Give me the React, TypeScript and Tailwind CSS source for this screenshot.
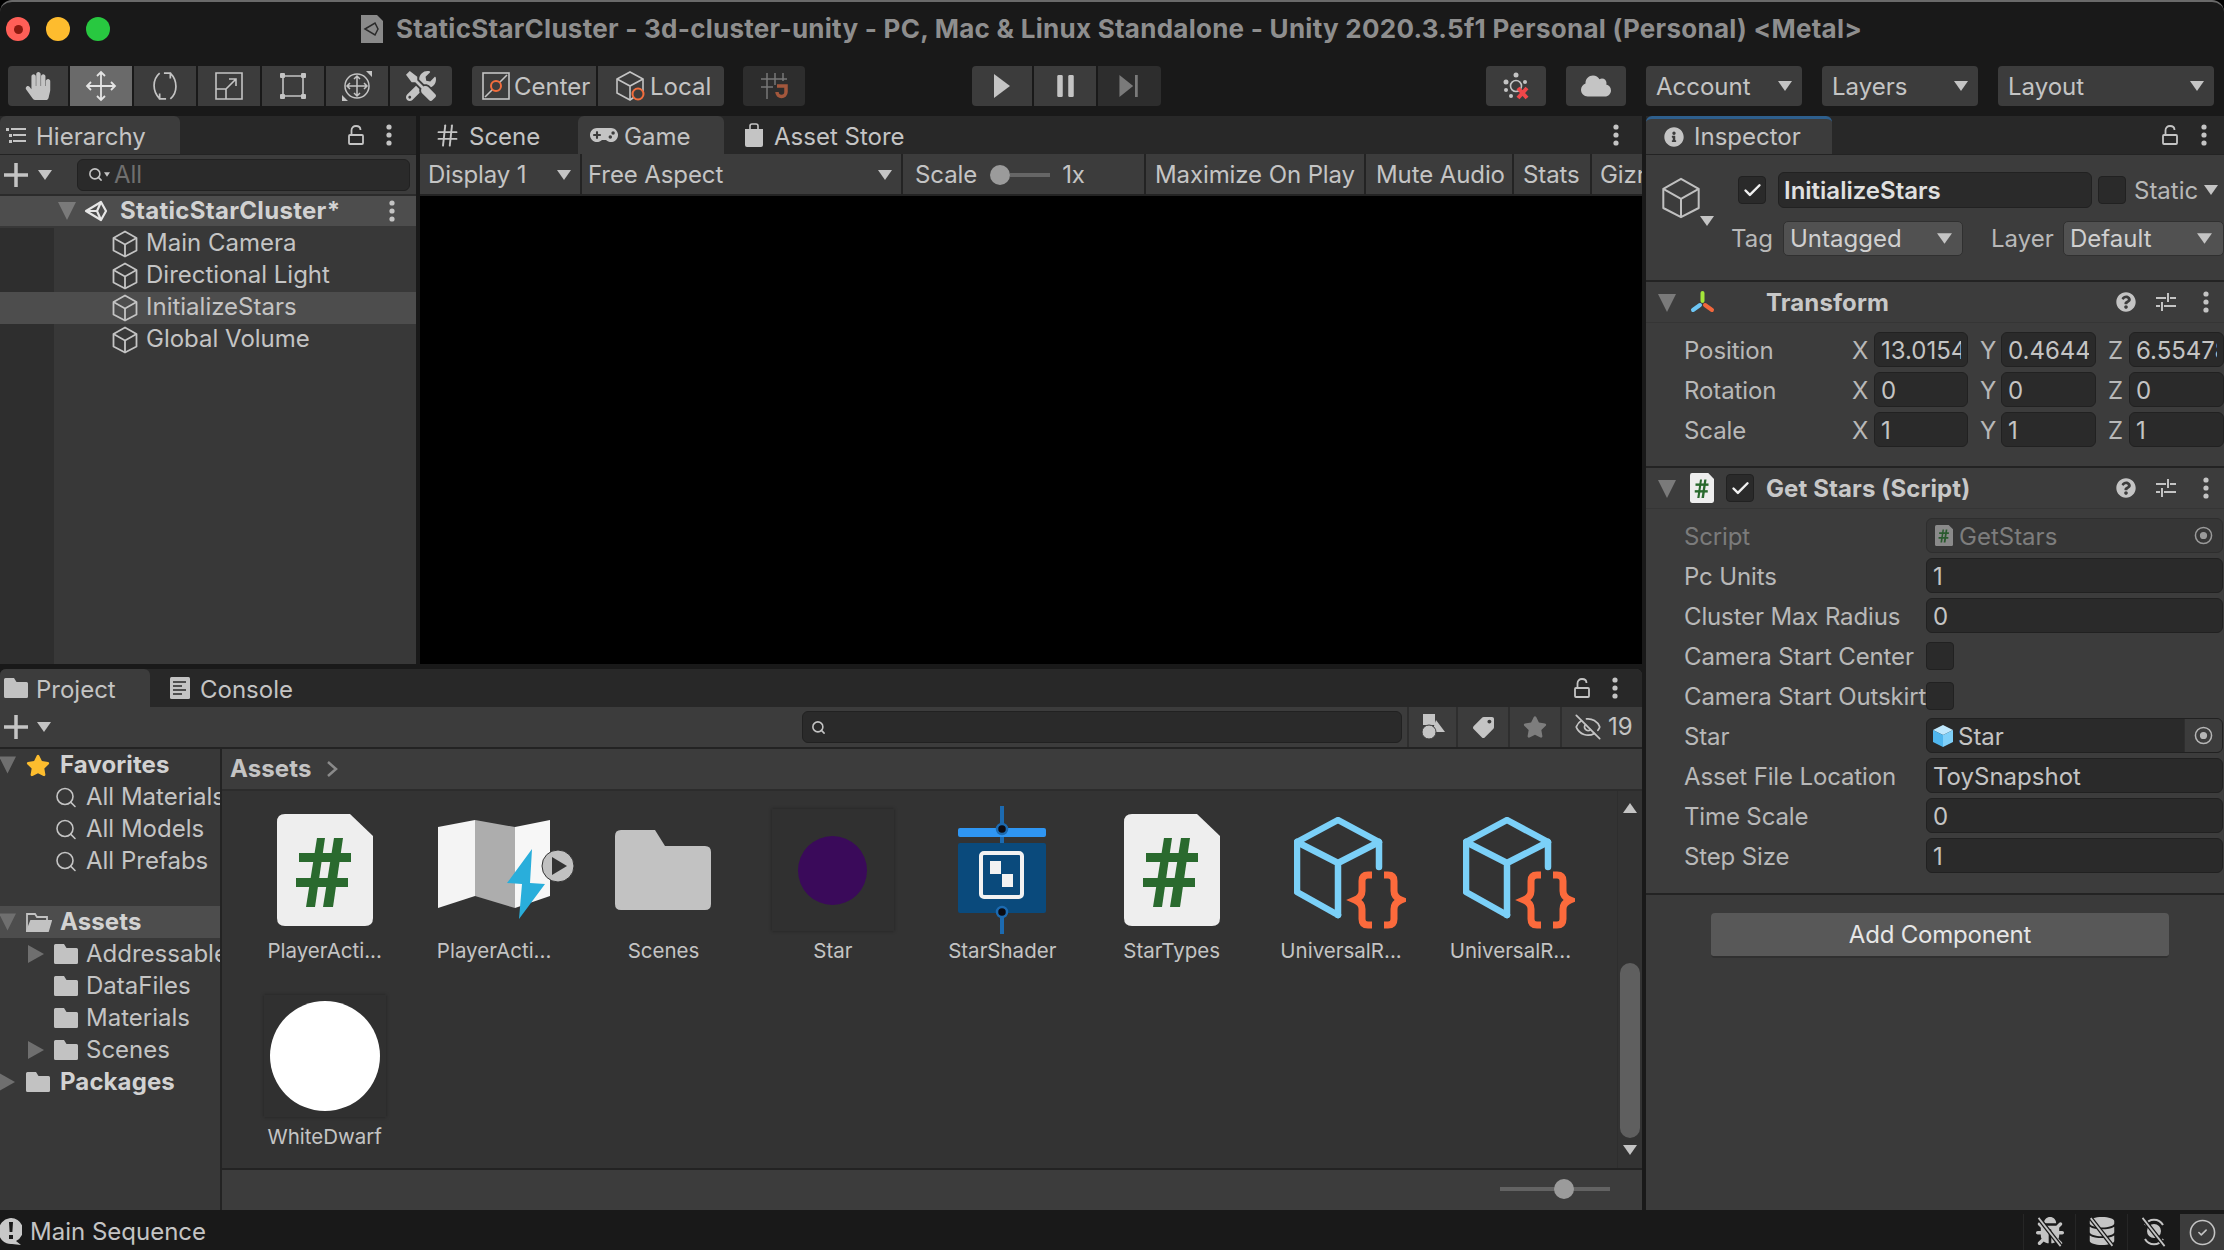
import React from "react";
import { FaHandPaper, FaTools, FaCloud, FaGamepad, FaInfoCircle, FaQuestionCircle, FaStar, FaTag, FaBug, FaDatabase } from "react-icons/fa";
import { Hash, Search, EyeOff, CircleCheck, Check } from "lucide-react";

const Tri = ({ dir = "down", className = "" }: { dir?: string; className?: string }) => {
  const p = dir === "down" ? "0,0 14,0 7,10" : dir === "right" ? "0,0 16,9 0,18" : dir === "up" ? "7,0 14,10 0,10" : "0,0 18,0 9,18";
  const vb = dir === "right" ? "0 0 16 18" : dir === "big" ? "0 0 18 18" : "0 0 14 10";
  return (
    <svg viewBox={vb} className={className}>
      <polygon points={p} fill="currentColor" />
    </svg>
  );
};

const Dots = ({ className = "" }: { className?: string }) => (
  <svg viewBox="0 0 6 22" className={"w-[6px] h-[22px] text-[#c4c4c4] " + className}>
    <circle cx="3" cy="3" r="2.6" fill="currentColor" />
    <circle cx="3" cy="11" r="2.6" fill="currentColor" />
    <circle cx="3" cy="19" r="2.6" fill="currentColor" />
  </svg>
);

const Lock = ({ className = "" }: { className?: string }) => (
  <svg viewBox="0 0 16 20" className={"w-[16px] h-[20px] " + className} fill="none" stroke="#c4c4c4" strokeWidth="1.8">
    <rect x="1" y="10" width="14" height="9" rx="1" />
    <path d="M3.5 10V5.5C3.5 2.5 5.5 1 8 1s4.5 1.5 4.5 4" />
  </svg>
);

const Cube = ({ className = "", color = "#c4c4c4", sw = 1.8 }: { className?: string; color?: string; sw?: number }) => (
  <svg viewBox="0 0 26 28" className={className} fill="none" stroke={color} strokeWidth={sw} strokeLinejoin="round">
    <path d="M13 1.5 24.5 8v12.5L13 26.5 1.5 20.5V8Z" />
    <path d="M1.5 8 13 14.5 24.5 8M13 14.5v12" />
  </svg>
);

const UnityLogo = ({ className = "", color = "#e6e6e6" }: { className?: string; color?: string }) => (
  <svg viewBox="0 0 24 22" className={className} fill="none" stroke={color} strokeWidth="2.2" strokeLinejoin="round">
    <path d="M2 11 17 2l5 9-5 9Z" />
    <path d="M2 11h11l4-9M13 11l4 9" />
  </svg>
);

const Page = ({ className = "", color = "#2a6a2e", bg = "#eeeeee" }: { className?: string; color?: string; bg?: string }) => (
  <svg viewBox="0 0 96 112" className={className} preserveAspectRatio="none">
    <path d="M8 0H73L96 22V104Q96 112 88 112H8Q0 112 0 104V8Q0 0 8 0Z" fill={bg} />
    <polygon points="40,24 48,24 38,93 29,93" fill={color} />
    <polygon points="57,24 66,24 56,93 46,93" fill={color} />
    <polygon points="22,39 74,39 74,48 22,48" fill={color} />
    <polygon points="19,64 71,64 71,73 19,73" fill={color} />
  </svg>
);

const FolderI = ({ className = "" }: { className?: string }) => (
  <svg viewBox="0 0 96 80" className={className}>
    <path d="M6 0H40L50 16H90Q96 16 96 22V74Q96 80 90 80H6Q0 80 0 74V6Q0 0 6 0Z" fill="#c2c2c2" />
  </svg>
);

const FolderOpen = ({ className = "" }: { className?: string }) => (
  <svg viewBox="0 0 26 20" className={className} fill="none" stroke="#c2c2c2" strokeWidth="1.8">
    <path d="M1 19V2h8l2 3h10v4" />
    <path d="M1 19 5 9h20l-3 10Z" fill="#c2c2c2" />
  </svg>
);

const Target = () => (
  <div className="w-[38px] h-[33px] flex items-center justify-center bg-[#3c3c3c] border-l border-[#2f2f2f] ml-auto">
    <svg viewBox="0 0 20 20" className="w-[19px] h-[19px]" fill="none" stroke="#b5b5b5" strokeWidth="1.6">
      <circle cx="10" cy="10" r="8.5" />
      <circle cx="10" cy="10" r="3" fill="#b5b5b5" />
    </svg>
  </div>
);

const Sliders = () => (
  <svg viewBox="0 0 20 20" className="w-[20px] h-[20px]" fill="none" stroke="#c4c4c4" strokeWidth="2">
    <path d="M0 6h10M14 6h6M12 1v9M0 14h4M8 14h12M6 10v9" />
  </svg>
);

const TBtn = ({ className = "", children }: { className?: string; children?: React.ReactNode }) => (
  <div className={"h-[40px] flex items-center justify-center bg-[#3c3c3c] " + className}>{children}</div>
);

const Drop = ({ label, className = "" }: { label: string; className?: string }) => (
  <div className={"h-[40px] rounded-[4px] bg-[#3c3c3c] flex items-center justify-between pl-[10px] pr-[10px] text-[#c4c4c4] " + className}>
    <span className="translate-y-[1px]">{label}</span>
    <Tri className="w-[14px] h-[10px] text-[#c4c4c4]" />
  </div>
);

const Toolbar = () => (
  <div className="h-[40px] flex pl-[8px] shrink-0">
    <div className="flex gap-[2px]">
      <TBtn className="w-[60px] rounded-l-[4px]"><FaHandPaper className="w-[28px] h-[28px] text-[#c4c4c4]" /></TBtn>
      <TBtn className="w-[62px] !bg-[#6a6a6a]">
        <svg viewBox="0 0 32 32" className="w-[32px] h-[32px]" fill="none" stroke="#e4e4e4" strokeWidth="1.8">
          <path d="M16 2v28M2 16h28M12 6l4-4 4 4M12 26l4 4 4-4M6 12l-4 4 4 4M26 12l4 4-4 4" />
        </svg>
      </TBtn>
      <TBtn className="w-[62px]">
        <svg viewBox="0 0 30 30" className="w-[32px] h-[32px]" fill="none" stroke="#c4c4c4" strokeWidth="1.6">
          <path d="M10 3C3 9 3 20 10 27M20 27c7-6 7-17 0-24M14 3H20v5M16 27h-6v-5" />
        </svg>
      </TBtn>
      <TBtn className="w-[62px]">
        <svg viewBox="0 0 28 28" className="w-[28px] h-[28px]" fill="none" stroke="#c4c4c4" strokeWidth="1.6">
          <path d="M1 1h26v26H1zM1 17h10v10M11 17l10-10M14 7h7v7" />
        </svg>
      </TBtn>
      <TBtn className="w-[62px]">
        <svg viewBox="0 0 28 28" className="w-[28px] h-[28px]" stroke="#c4c4c4" strokeWidth="1.6" fill="#c4c4c4">
          <path d="M4 4h20M4 24h20M4 4v20M24 4v20" fill="none" />
          <rect x="1" y="1" width="5" height="5" rx="1" strokeWidth="0" />
          <rect x="22" y="1" width="5" height="5" rx="1" strokeWidth="0" />
          <rect x="1" y="22" width="5" height="5" rx="1" strokeWidth="0" />
          <rect x="22" y="22" width="5" height="5" rx="1" strokeWidth="0" />
        </svg>
      </TBtn>
      <TBtn className="w-[62px]">
        <svg viewBox="0 0 32 32" className="w-[32px] h-[32px]" fill="none" stroke="#c4c4c4" strokeWidth="1.5">
          <circle cx="16" cy="16" r="12" />
          <path d="M16 6v20M6 16h20M13 9l3-3 3 3M13 23l3 3 3-3M9 13l-3 3 3 3M23 13l3 3-3 3" />
          <path d="M25 1h6v6zM1 25v6h6z" fill="#c4c4c4" strokeWidth="0" />
        </svg>
      </TBtn>
      <TBtn className="w-[62px] rounded-r-[4px]"><FaTools className="w-[30px] h-[30px] text-[#c4c4c4]" /></TBtn>
    </div>
    <div className="flex gap-[2px] ml-[20px]">
      <TBtn className="w-[124px] rounded-l-[4px] text-[#c4c4c4] gap-[4px] justify-start pl-[10px]">
        <svg viewBox="0 0 28 28" className="w-[28px] h-[28px] shrink-0" fill="none" stroke="#c4c4c4" strokeWidth="1.6">
          <rect x="1" y="1" width="26" height="26" />
          <path d="M3 25 25 3" />
          <circle cx="14" cy="14" r="5" stroke="#f26d3d" strokeWidth="2" fill="#3c3c3c" />
        </svg>
        <span className="translate-y-[1px]">Center</span>
      </TBtn>
      <TBtn className="w-[126px] rounded-r-[4px] text-[#c4c4c4] gap-[4px] justify-start pl-[18px]">
        <svg viewBox="0 0 30 30" className="w-[30px] h-[30px] shrink-0" fill="none" stroke="#c4c4c4" strokeWidth="1.6">
          <path d="M14 1 27 8v12l-13 9L1 22V8Z" />
          <path d="M1 8l13 7 13-7M14 15v14" />
          <circle cx="22" cy="23" r="5.5" stroke="#f26d3d" strokeWidth="2" fill="#3c3c3c" />
        </svg>
        <span className="translate-y-[1px]">Local</span>
      </TBtn>
    </div>
    <TBtn className="w-[62px] ml-[19px] rounded-[4px] !bg-[#2d2d2d]">
      <svg viewBox="0 0 28 28" className="w-[28px] h-[28px]" fill="none" strokeWidth="1.5">
        <path d="M7 1v26M15 1v12M23 1v8M1 7h26M1 15h12" stroke="#777" />
        <path d="M17 14h9v6a4.500 4.500 0 0 1-9 0" stroke="#a3573c" strokeWidth="3.500" />
      </svg>
    </TBtn>
    <div className="flex gap-[2px] ml-[167px]">
      <TBtn className="w-[60px] rounded-l-[4px]">
        <svg viewBox="0 0 18 26" className="w-[18px] h-[26px]"><polygon points="1,1 17,13 1,25" fill="#c4c4c4" /></svg>
      </TBtn>
      <TBtn className="w-[62px]">
        <svg viewBox="0 0 18 24" className="w-[17px] h-[22px]"><rect width="6" height="24" rx="1.500" fill="#c4c4c4" /><rect x="12" width="6" height="24" rx="1.500" fill="#c4c4c4" /></svg>
      </TBtn>
      <TBtn className="w-[63px] rounded-r-[4px] !bg-[#2d2d2d]">
        <svg viewBox="0 0 22 24" className="w-[21px] h-[22px]"><polygon points="0,0 15,12 0,24" fill="#7a7a7a" /><rect x="17" width="3" height="24" fill="#7a7a7a" /></svg>
      </TBtn>
    </div>
    <TBtn className="w-[60px] ml-[325px] rounded-[4px]">
      <svg viewBox="0 0 30 30" className="w-[30px] h-[30px] translate-x-[2px]">
        <g fill="#c4c4c4">
          <circle cx="13" cy="4" r="2.500" /><circle cx="3" cy="11" r="2.500" /><circle cx="3" cy="19" r="2" /><circle cx="22" cy="11" r="2" /><circle cx="8" cy="25" r="2" />
        </g>
        <circle cx="13" cy="15" r="5.500" fill="none" stroke="#c4c4c4" strokeWidth="1.600" />
        <path d="M15 17l9 10M24 17l-9 10" stroke="#f0474a" strokeWidth="4" />
      </svg>
    </TBtn>
    <TBtn className="w-[60px] ml-[20px] rounded-[4px]"><FaCloud className="w-[30px] h-[30px] text-[#c4c4c4]" /></TBtn>
    <Drop label="Account" className="w-[156px] ml-[20px]" />
    <Drop label="Layers" className="w-[156px] ml-[20px]" />
    <Drop label="Layout" className="w-[216px] ml-[20px]" />
  </div>
);

const Tab = ({ active = false, className = "", children }: { active?: boolean; className?: string; children?: React.ReactNode }) => (
  <div className={"h-[38px] flex items-center rounded-t-[6px] text-[#c4c4c4] shrink-0 " + (active ? "bg-[#3c3c3c] " : "") + className}>{children}</div>
);

const HierRow = ({ label, selected = false }: { label: string; selected?: boolean }) => (
  <div className={"h-[32px] flex items-center pl-[112px] " + (selected ? "bg-[#4d4d4d]" : "")}>
    <Cube className="w-[26px] h-[28px] shrink-0" />
    <span className="ml-[8px] text-[#c4c4c4] -translate-y-[1px]">{label}</span>
  </div>
);

const Hierarchy = () => (
  <div className="w-[416px] flex flex-col bg-[#383838] shrink-0">
    <div className="h-[38px] bg-[#282828] flex items-center shrink-0">
      <Tab active className="w-[180px] pl-[6px]">
        <svg viewBox="0 0 20 20" className="w-[20px] h-[20px]" fill="#c4c4c4">
          <rect x="0" y="3" width="3" height="3" /><rect x="5" y="3" width="15" height="2" /><rect x="3" y="9" width="3" height="3" /><rect x="7" y="9" width="13" height="2" /><rect x="3" y="15" width="3" height="3" /><rect x="7" y="15" width="13" height="2" />
        </svg>
        <span className="ml-[10px] translate-y-[2px]">Hierarchy</span>
      </Tab>
      <Lock className="ml-[168px]" />
      <Dots className="ml-[22px]" />
    </div>
    <div className="h-[42px] bg-[#3c3c3c] flex items-center border-t border-[#232323] border-b-2 border-b-[#2b2b2b] shrink-0">
      <svg viewBox="0 0 24 24" className="w-[24px] h-[24px] ml-[4px]" stroke="#c4c4c4" strokeWidth="3.500"><path d="M12 0v24M0 12h24" /></svg>
      <Tri className="w-[14px] h-[10px] text-[#c4c4c4] ml-[10px]" />
      <div className="w-[333px] h-[32px] ml-[25px] rounded-[6px] bg-[#2a2a2a] border border-[#212121] flex items-center pl-[10px] text-[#6f6f6f]">
        <Search className="w-[15px] h-[15px] text-[#c4c4c4]" strokeWidth={2.500} />
        <Tri className="w-[6px] h-[5px] text-[#c4c4c4] ml-[1px]" />
        <span className="ml-[4px]">All</span>
      </div>
    </div>
    <div className="h-[30px] bg-[#4d4d4d] flex items-center shrink-0 mt-0">
      <Tri dir="big" className="w-[18px] h-[18px] text-[#7a7a7a] ml-[58px]" />
      <UnityLogo className="w-[24px] h-[22px] ml-[8px]" />
      <span className="ml-[12px] font-bold tracking-[0.3px] text-[#d2d2d2]">StaticStarCluster*</span>
      <Dots className="ml-auto mr-[21px]" />
    </div>
    <div className="flex-1 flex pt-[2px] bg-[#383838]">
      <div className="w-full bg-[linear-gradient(to_right,#2e2e2e_54px,transparent_54px)]">
        <HierRow label="Main Camera" />
        <HierRow label="Directional Light" />
        <HierRow label="InitializeStars" selected />
        <HierRow label="Global Volume" />
      </div>
    </div>
  </div>
);

const GSeg = ({ className = "", children }: { className?: string; children?: React.ReactNode }) => (
  <div className={"h-[40px] pt-[1px] bg-[#3c3c3c] flex items-center text-[#c4c4c4] whitespace-nowrap overflow-hidden shrink-0 tracking-[-0.1px] " + className}>{children}</div>
);

const Game = () => (
  <div className="w-[1222px] flex flex-col shrink-0 bg-black">
    <div className="h-[38px] bg-[#282828] flex items-center shrink-0 text-[#c4c4c4]">
      <Tab className="w-[158px] pl-[14px]">
        <Hash className="w-[27px] h-[27px]" strokeWidth={1.700} />
        <span className="ml-[8px] translate-y-[2px]">Scene</span>
      </Tab>
      <Tab active className="w-[146px] pl-[12px]">
        <FaGamepad className="w-[28px] h-[24px]" />
        <span className="ml-[6px] translate-y-[2px]">Game</span>
      </Tab>
      <Tab className="w-[240px] pl-[20px]">
        <svg viewBox="0 0 20 24" className="w-[20px] h-[24px]">
          <path d="M1 6h18v16a2 2 0 0 1-2 2H3a2 2 0 0 1-2-2Z" fill="#c4c4c4" />
          <path d="M6 9V3a2 2 0 0 1 2-2h4a2 2 0 0 1 2 2v6" fill="none" stroke="#c4c4c4" strokeWidth="1.600" />
        </svg>
        <span className="ml-[10px] translate-y-[2px]">Asset Store</span>
      </Tab>
      <Dots className="ml-[649px]" />
    </div>
    <div className="h-[42px] flex gap-[2px] border-b-2 border-[#232323] bg-[#232323] shrink-0 overflow-hidden">
      <GSeg className="w-[160px] pl-[8px] justify-between pr-[9px]"><span>Display 1</span><Tri className="w-[14px] h-[10px]" /></GSeg>
      <GSeg className="w-[319px] pl-[6px] justify-between pr-[9px]"><span>Free Aspect</span><Tri className="w-[14px] h-[10px]" /></GSeg>
      <GSeg className="w-[241px] pl-[12px]">
        <span>Scale</span>
        <div className="ml-[13px] w-[20px] h-[20px] rounded-full bg-[#9b9b9b] shrink-0" />
        <div className="w-[40px] h-[4px] bg-[#666666] shrink-0" />
        <span className="ml-[12px]">1x</span>
      </GSeg>
      <GSeg className="w-[218px] pl-[9px]">Maximize On Play</GSeg>
      <GSeg className="w-[146px] pl-[10px]">Mute Audio</GSeg>
      <GSeg className="w-[76px] pl-[9px]">Stats</GSeg>
      <GSeg className="w-[50px] pl-[8px]">Gizmos</GSeg>
    </div>
    <div className="flex-1 bg-black" />
  </div>
);

const SideRow = ({ icon, label, arrow = 0, bold = false, sel = false, level = 1 }: { icon: React.ReactNode; label: string; arrow?: number; bold?: boolean; sel?: boolean; level?: number }) => (
  <div className={"h-[32px] w-[220px] flex items-center relative overflow-hidden whitespace-nowrap " + (sel ? "bg-[#4d4d4d]" : "")}>
    {arrow === 1 && <Tri dir="big" className="absolute left-[-1px] top-[7px] w-[17px] h-[18px] text-[#6f6f6f]" />}
    {arrow === 2 && <Tri dir="right" className="absolute left-[-1px] top-[7px] w-[16px] h-[18px] text-[#6f6f6f]" />}
    {arrow === 3 && <Tri dir="right" className="absolute left-[28px] top-[7px] w-[16px] h-[18px] text-[#6f6f6f]" />}
    <div className={level === 1 ? "w-[54px] ml-[26px] shrink-0 flex items-center h-[26px] overflow-hidden" : "ml-[54px] w-[24px] shrink-0 flex items-center h-[26px]"}>{icon}</div>
    <span className={(level === 1 ? "-ml-[20px] " : "ml-[8px] ") + (bold ? "font-bold tracking-[0.1px] text-[#d2d2d2]" : "text-[#c4c4c4]")}>{label}</span>
  </div>
);

const SearchI = () => <Search className="w-[25px] h-[25px] text-[#c4c4c4]" strokeWidth={1.600} />;

const Item = ({ label, children }: { label: string; children: React.ReactNode }) => (
  <div className="flex flex-col items-center w-[169.4px] h-[186px]">
    <div className="h-[122px] w-full flex items-center justify-center">{children}</div>
    <div className="h-[40px] flex items-center text-[20.5px] text-[#c4c4c4] whitespace-nowrap">{label}</div>
  </div>
);

const Thumb = ({ color, d }: { color: string; d: string }) => (
  <div className="w-[122px] h-[122px] bg-[#303030] shadow-[0_0_3px_#222222] flex items-center justify-center">
    <div className={"rounded-full " + d} style={{ backgroundColor: color }} />
  </div>
);

const URP = () => (
  <svg viewBox="0 0 112 112" className="w-[112px] h-[112px] translate-x-[9px] translate-y-[3px]" fill="none">
    <g stroke="#7bd0f8" strokeWidth="6.500" strokeLinejoin="round" strokeLinecap="round">
      <path d="M85 50V25L44 3 3 25V75L44 98" />
      <path d="M3 25 44 46 85 25M44 46V98" />
    </g>
    <g stroke="#fb6a3c" strokeWidth="7">
      <path d="M78 58H74Q68 58 68 64V74Q68 80 61 83 68 86 68 92V102Q68 108 74 108H78" />
      <path d="M90 58H94Q100 58 100 64V74Q100 80 107 83 100 86 100 92V102Q100 108 94 108H90" />
    </g>
  </svg>
);

const MapI = () => (
  <svg viewBox="0 0 136 100" className="w-[136px] h-[100px] translate-x-[12px] shrink-0">
    <polygon points="0,7 37,0 37,76 0,88" fill="#f4f4f4" />
    <polygon points="37,0 77,7 77,88 37,76" fill="#adadad" />
    <polygon points="77,7 112,0 112,76 77,88" fill="#f7f7f7" />
    <polygon points="94,29 69,63 84,64 81,99 107,64 92,63" fill="#29aedb" />
    <circle cx="120" cy="46" r="16" fill="#c1c1c1" stroke="#333" strokeWidth="1" />
    <polygon points="114,37 114,55 129,46" fill="#333333" />
  </svg>
);

const ShaderI = () => (
  <svg viewBox="0 0 88 128" className="w-[88px] h-[128px]">
    <path d="M44 0V128" stroke="#1c6ab0" strokeWidth="4" />
    <rect x="0" y="22" width="88" height="9" rx="2" fill="#2f96f3" />
    <rect x="0" y="37" width="88" height="70" rx="2" fill="#0a4a7c" />
    <rect x="23" y="47" width="41" height="44" rx="3" fill="none" stroke="#f2f2f2" strokeWidth="4" />
    <rect x="32" y="55" width="11" height="13" fill="#f2f2f2" />
    <rect x="44" y="68" width="11" height="13" fill="#f2f2f2" />
    <circle cx="44" cy="23" r="5" fill="#0b0b12" stroke="#1c6ab0" strokeWidth="2.500" />
    <circle cx="44" cy="106" r="5" fill="#0b0b12" stroke="#1c6ab0" strokeWidth="2.500" />
  </svg>
);

const Project = () => (
  <div className="flex-1 flex flex-col bg-[#383838] min-h-0 rounded-t-[6px]">
    <div className="h-[38px] bg-[#282828] flex items-center shrink-0 rounded-t-[6px]">
      <Tab active className="w-[150px] pl-[4px]">
        <FolderI className="w-[24px] h-[20px]" />
        <span className="ml-[8px] translate-y-[2px]">Project</span>
      </Tab>
      <div className="flex items-center pl-[20px] text-[#c4c4c4]">
        <svg viewBox="0 0 20 22" className="w-[20px] h-[22px]">
          <rect width="20" height="22" rx="1.500" fill="#c4c4c4" />
          <path d="M3 5h13M3 9h9M3 13h13M3 17h9" stroke="#282828" strokeWidth="1.600" />
        </svg>
        <span className="ml-[10px] translate-y-[2px]">Console</span>
      </div>
      <Lock className="ml-[1281px]" />
      <Dots className="ml-[22px]" />
    </div>
    <div className="h-[40px] bg-[#3c3c3c] flex items-center shrink-0">
      <svg viewBox="0 0 24 24" className="w-[24px] h-[24px] ml-[4px]" stroke="#c4c4c4" strokeWidth="3.500"><path d="M12 0v24M0 12h24" /></svg>
      <Tri className="w-[14px] h-[10px] text-[#c4c4c4] ml-[9px]" />
      <div className="w-[600px] h-[32px] ml-[751px] rounded-[6px] bg-[#2a2a2a] border border-[#212121] flex items-center pl-[8px]">
        <Search className="w-[15px] h-[15px] text-[#c4c4c4]" strokeWidth={2.500} />
      </div>
      <div className="w-[5px] h-full" />
      <div className="w-[51px] h-full border-x-2 border-[#2e2e2e] flex items-center justify-center">
        <svg viewBox="0 0 24 26" className="w-[24px] h-[26px]" fill="#c4c4c4">
          <rect x="2" y="0" width="12" height="11" />
          <polygon points="15,6 24,18 11,18" />
          <circle cx="8" cy="18" r="7" stroke="#3c3c3c" strokeWidth="1" />
        </svg>
      </div>
      <div className="w-[52px] h-full border-r-2 border-[#2e2e2e] flex items-center justify-center"><FaTag className="w-[21px] h-[21px] text-[#c4c4c4] -scale-x-100" /></div>
      <div className="w-[52px] h-full border-r-2 border-[#2e2e2e] flex items-center justify-center"><FaStar className="w-[24px] h-[24px] text-[#7d7d7d]" /></div>
      <div className="flex-1 h-full flex items-center pl-[11px] text-[#c4c4c4]">
        <EyeOff className="w-[30px] h-[28px]" strokeWidth={1.500} />
        <span className="ml-[5px]">19</span>
      </div>
    </div>
    <div className="flex-1 flex border-t-2 border-[#232323] min-h-0">
      <div className="w-[220px] shrink-0">
        <SideRow bold arrow={1} label="Favorites" icon={<FaStar className="w-[24px] h-[23px] text-[#fdbd2e]" />} />
        <SideRow level={2} label="All Materials" icon={<SearchI />} />
        <SideRow level={2} label="All Models" icon={<SearchI />} />
        <SideRow level={2} label="All Prefabs" icon={<SearchI />} />
        <div className="h-[29px]" />
        <SideRow bold sel arrow={1} label="Assets" icon={<FolderOpen className="w-[26px] h-[20px]" />} />
        <SideRow level={2} arrow={3} label="Addressables" icon={<FolderI className="w-[24px] h-[20px]" />} />
        <SideRow level={2} label="DataFiles" icon={<FolderI className="w-[24px] h-[20px]" />} />
        <SideRow level={2} label="Materials" icon={<FolderI className="w-[24px] h-[20px]" />} />
        <SideRow level={2} arrow={3} label="Scenes" icon={<FolderI className="w-[24px] h-[20px]" />} />
        <SideRow bold arrow={2} label="Packages" icon={<FolderI className="w-[24px] h-[20px]" />} />
      </div>
      <div className="flex-1 flex flex-col border-l-2 border-[#232323] min-w-0">
        <div className="h-[40px] bg-[#3c3c3c] flex items-center pl-[8px] shrink-0">
          <span className="font-bold tracking-[0.1px] text-[#c4c4c4]">Assets</span>
          <svg viewBox="0 0 12 18" className="w-[12px] h-[18px] ml-[15px]" fill="none" stroke="#8a8a8a" strokeWidth="2.500"><path d="M2 2l8 7-8 7" /></svg>
        </div>
        <div className="h-[379px] flex bg-[#333333] border-t-2 border-[#2c2c2c] shrink-0">
          <div className="w-[1395px] pl-[18px] pt-[18px] grid grid-cols-[repeat(8,169.4px)] auto-rows-[186px] content-start">
            <Item label="PlayerActi..."><Page className="w-[96px] h-[112px]" /></Item>
            <Item label="PlayerActi..."><MapI /></Item>
            <Item label="Scenes"><FolderI className="w-[96px] h-[80px]" /></Item>
            <Item label="Star"><Thumb color="#3a0a5a" d="w-[69px] h-[69px]" /></Item>
            <Item label="StarShader"><ShaderI /></Item>
            <Item label="StarTypes"><Page className="w-[96px] h-[112px]" /></Item>
            <Item label="UniversalR..."><URP /></Item>
            <Item label="UniversalR..."><URP /></Item>
            <Item label="WhiteDwarf"><Thumb color="#ffffff" d="w-[110px] h-[110px]" /></Item>
          </div>
          <div className="w-[25px] border-l border-[#2e2e2e] flex flex-col items-center pt-[12px] shrink-0">
            <Tri dir="up" className="w-[14px] h-[10px] text-[#c4c4c4]" />
            <div className="mt-[150px] w-[20px] h-[175px] rounded-full bg-[#5f5f5f]" />
            <Tri className="mt-[7px] w-[14px] h-[10px] text-[#c4c4c4]" />
          </div>
        </div>
        <div className="flex-1 bg-[#3c3c3c] border-t-2 border-[#232323] flex items-center pl-[1278px]">
          <div className="w-[110px] h-[4px] bg-[#636363] relative -translate-y-[1px]">
            <div className="absolute left-[54px] -top-[8px] w-[20px] h-[20px] rounded-full bg-[#9b9b9b]" />
          </div>
        </div>
      </div>
    </div>
  </div>
);

const Field = ({ children, className = "" }: { children?: React.ReactNode; className?: string }) => (
  <div className={"h-[35px] bg-[#2a2a2a] border border-[#212121] rounded-[6px] pl-[6px] pr-[6px] flex items-center text-[#c4c4c4] whitespace-nowrap " + className}>
    <div className="overflow-hidden w-full leading-[28px] translate-y-[1px]">{children}</div>
  </div>
);

const XYZ = ({ label, x, y, z }: { label: string; x: string; y: string; z: string }) => (
  <div className="h-[35px] mb-[5px] flex items-center pl-[38px]">
    <span className="w-[168px] text-[#b8b8b8] shrink-0 tracking-[-0.1px] translate-y-[1px]">{label}</span>
    <span className="w-[22px] text-[#b8b8b8] shrink-0 translate-y-[1px]">X</span>
    <Field className="w-[94px] shrink-0">{x}</Field>
    <span className="w-[21px] ml-[12px] text-[#b8b8b8] shrink-0 translate-y-[1px]">Y</span>
    <Field className="w-[95px] shrink-0">{y}</Field>
    <span className="w-[21px] ml-[12px] text-[#b8b8b8] shrink-0 translate-y-[1px]">Z</span>
    <Field className="w-[95px] shrink-0">{z}</Field>
  </div>
);

const Prop = ({ label, dim = false, children }: { label: string; dim?: boolean; children?: React.ReactNode }) => (
  <div className="h-[35px] mb-[5px] flex items-center pl-[38px]">
    <span className={"w-[242px] shrink-0 whitespace-nowrap tracking-[-0.14px] translate-y-[1px] " + (dim ? "text-[#7b7b7b]" : "text-[#b8b8b8]")}>{label}</span>
    {children}
  </div>
);

const CB = ({ checked = false, className = "" }: { checked?: boolean; className?: string }) => (
  <div className={"w-[28px] h-[28px] rounded-[4px] bg-[#2a2a2a] border border-[#212121] flex items-center justify-center shrink-0 " + className}>
    {checked && <Check className="w-[21px] h-[21px] text-[#f0f0f0]" strokeWidth={2.800} />}
  </div>
);

const CompHeader = ({ icon, title }: { icon: React.ReactNode; title: string }) => (
  <div className="h-[41px] flex items-center border-b border-[#353535] shrink-0 relative">
    <Tri dir="big" className="absolute left-[12px] top-[12px] w-[18px] h-[18px] text-[#7a7a7a]" />
    <div className="ml-[44px] w-[77px] flex items-center gap-[12px]">{icon}</div>
    <span className="font-bold tracking-[0.1px] text-[#c8c8c8] translate-y-[1px] -translate-x-[1px]">{title}</span>
    <FaQuestionCircle className="absolute left-[470px] top-[10px] w-[20px] h-[20px] text-[#c4c4c4]" />
    <div className="absolute left-[510px] top-[10px]"><Sliders /></div>
    <Dots className="absolute left-[557px] top-[9px]" />
  </div>
);

const Inspector = () => (
  <div className="flex-1 flex flex-col bg-[#3c3c3c] ml-[4px]">
    <div className="h-[38px] bg-[#282828] flex items-center shrink-0">
      <Tab active className="w-[186px] pl-[18px] border-t-[3px] border-[#2e5f8d] text-[#c4c4c4]">
        <FaInfoCircle className="w-[20px] h-[20px]" />
        <span className="ml-[10px]">Inspector</span>
      </Tab>
      <Lock className="ml-[330px]" />
      <Dots className="ml-[23px]" />
    </div>
    <div className="h-[126px] flex border-t border-[#232323] shrink-0">
      <div className="w-[85px] shrink-0 pt-[21px] pl-[15px] relative">
        <Cube className="w-[40px] h-[44px]" color="#c0c0c0" sw={1.300} />
        <Tri className="absolute left-[54px] top-[61px] w-[14px] h-[10px] text-[#c4c4c4]" />
      </div>
      <div className="flex-1 pt-[17px] min-w-0">
        <div className="flex items-center h-[36px]">
          <CB checked className="ml-[7px]" />
          <div className="ml-[12px] w-[314px] h-[36px] pt-[2px] bg-[#2a2a2a] border border-[#212121] rounded-[6px] flex items-center pl-[5px] font-semibold text-[#e0e0e0] shrink-0">InitializeStars</div>
          <CB className="ml-[6px]" />
          <span className="ml-[8px] text-[#b8b8b8] translate-y-[1px]">Static</span>
          <Tri className="ml-[6px] w-[14px] h-[10px] text-[#c4c4c4]" />
        </div>
        <div className="flex items-center h-[35px] mt-[13px] text-[#b8b8b8]">
          <span className="w-[52px] shrink-0">Tag</span>
          <div className="w-[180px] h-[35px] bg-[#515151] border border-[#303030] rounded-[5px] flex items-center justify-between pl-[6px] pr-[10px] text-[#d0d0d0] shrink-0">
            <span>Untagged</span><Tri className="w-[15px] h-[11px] text-[#c4c4c4]" />
          </div>
          <span className="ml-[28px] w-[72px] shrink-0">Layer</span>
          <div className="w-[161px] h-[35px] bg-[#515151] border border-[#303030] rounded-[5px] flex items-center justify-between pl-[6px] pr-[6px] text-[#d0d0d0] shrink-0">
            <span>Default</span><Tri className="w-[15px] h-[11px] text-[#c4c4c4] -translate-x-[5px]" />
          </div>
        </div>
      </div>
    </div>
    <div className="h-[2px] bg-[#232323] shrink-0" />
    <CompHeader
      title="Transform"
      icon={
        <svg viewBox="0 0 25 22" className="w-[25px] h-[22px]" fill="none" strokeWidth="4" strokeLinecap="round">
          <path d="M12.500 2V10" stroke="#a4e63a" />
          <path d="M10 14 3 19" stroke="#6dc6f5" />
          <path d="M15 14 22 19" stroke="#f2673c" />
        </svg>
      }
    />
    <div className="pt-[9px] h-[143px] shrink-0">
      <XYZ label="Position" x="13.01543" y="0.4644" z="6.55478" />
      <XYZ label="Rotation" x="0" y="0" z="0" />
      <XYZ label="Scale" x="1" y="1" z="1" />
    </div>
    <div className="h-[2px] bg-[#232323] shrink-0" />
    <CompHeader
      title="Get Stars (Script)"
      icon={
        <>
          <Page className="w-[24px] h-[30px] shrink-0" />
          <CB checked />
        </>
      }
    />
    <div className="pt-[9px] h-[384px] shrink-0">
      <Prop label="Script" dim>
        <div className="w-[297px] h-[35px] bg-[#363636] border border-[#2e2e2e] rounded-[6px] flex items-center pl-[8px] text-[#7d7d7d] overflow-hidden">
          <Page className="w-[18px] h-[21px] shrink-0" bg="#8a8a8a" color="#2a5a2e" />
          <span className="ml-[6px] translate-y-[1px]">GetStars</span>
          <div className="ml-auto flex items-center justify-center w-[38px] h-full">
            <svg viewBox="0 0 20 20" className="w-[19px] h-[19px]" fill="none" stroke="#9a9a9a" strokeWidth="1.600">
              <circle cx="10" cy="10" r="8.500" />
              <circle cx="10" cy="10" r="3" fill="#9a9a9a" />
            </svg>
          </div>
        </div>
      </Prop>
      <Prop label="Pc Units"><Field className="w-[297px]">1</Field></Prop>
      <Prop label="Cluster Max Radius"><Field className="w-[297px]">0</Field></Prop>
      <Prop label="Camera Start Center"><CB /></Prop>
      <Prop label="Camera Start Outskirt"><CB /></Prop>
      <Prop label="Star">
        <div className="w-[297px] h-[35px] bg-[#2a2a2a] border border-[#212121] rounded-[6px] flex items-center pl-[6px] text-[#c4c4c4] overflow-hidden">
          <svg viewBox="0 0 20 22" className="w-[20px] h-[22px] shrink-0">
            <polygon points="10,0 20,5 10,10 0,5" fill="#bfe8fd" />
            <polygon points="0,5 10,10 10,22 0,17" fill="#4fb6ee" />
            <polygon points="20,5 10,10 10,22 20,17" fill="#7fd0f9" />
          </svg>
          <span className="ml-[5px] translate-y-[1px]">Star</span>
          <Target />
        </div>
      </Prop>
      <Prop label="Asset File Location"><Field className="w-[297px]">ToySnapshot</Field></Prop>
      <Prop label="Time Scale"><Field className="w-[297px]">0</Field></Prop>
      <Prop label="Step Size"><Field className="w-[297px]">1</Field></Prop>
    </div>
    <div className="h-[2px] bg-[#232323] shrink-0" />
    <div className="flex-1 bg-[#3a3a3a] pt-[18px] pl-[65px]">
      <div className="w-[458px] h-[45px] bg-[#585858] border-b-2 border-[#303030] rounded-[4px] flex items-center justify-center text-[#e6e6e6] tracking-[-0.2px]">Add Component</div>
    </div>
  </div>
);

const Slash = () => (
  <svg viewBox="0 0 30 34" className="absolute inset-0 w-full h-full" fill="none">
    <path d="M2 1 27 33" stroke="#191919" strokeWidth="5" />
    <path d="M2 1 27 33" stroke="#c4c4c4" strokeWidth="2" />
  </svg>
);

const StatusBar = () => (
  <div className="h-[40px] bg-[#191919] flex items-center shrink-0">
    <svg viewBox="0 0 23 28" className="w-[23px] h-[28px] -ml-[1px] mt-[1px]">
      <path d="M0 13a12 12 0 1 1 17 11l5 4-9-1A12 12 0 0 1 0 13Z" fill="#c8c8c8" />
      <path d="M10 5h4l-.6 10h-2.800ZM10 18h4v4h-4Z" fill="#191919" />
    </svg>
    <span className="ml-[8px] mt-[4px] text-[#c4c4c4]">Main Sequence</span>
    <div className="ml-auto flex h-full items-end">
      <div className="w-[52px] h-[36px] border-l border-[#262626] flex items-center justify-center">
        <div className="relative w-[28px] h-[30px]"><FaBug className="w-[28px] h-[28px] text-[#c4c4c4]" /><Slash /></div>
      </div>
      <div className="w-[52px] h-[36px] border-l border-[#262626] flex items-center justify-center">
        <div className="relative w-[26px] h-[30px]"><FaDatabase className="w-[26px] h-[28px] text-[#c4c4c4]" /><Slash /></div>
      </div>
      <div className="w-[53px] h-[36px] border-l border-[#262626] flex items-center justify-center">
        <div className="relative w-[28px] h-[30px]">
          <svg viewBox="0 0 28 30" className="w-[28px] h-[30px]" fill="none" stroke="#c4c4c4" strokeWidth="2">
            <path d="M5 8C9 1 19 1 23 8M23 22C19 29 9 29 5 22" />
            <circle cx="14" cy="14" r="6" fill="#c4c4c4" />
          </svg>
          <Slash />
        </div>
      </div>
      <div className="w-[44px] h-[36px] bg-[#3c3c3c] flex items-center justify-center">
        <CircleCheck className="w-[29px] h-[29px] text-[#c4c4c4]" strokeWidth={1.300} />
      </div>
    </div>
  </div>
);

export default function App() {
  return (
    <div className="w-[2224px] h-[1250px] bg-black overflow-hidden">
      <div className="w-full h-full bg-[#191919] rounded-t-[12px] border-t-2 border-[#6a6a6a] flex flex-col text-[24px] leading-none antialiased [font-family:Inter,sans-serif]">
        <div className="h-[64px] pb-[10px] flex items-center shrink-0">
          <div className="w-[24px] h-[24px] rounded-full bg-[#ff5f57] ml-[6px] flex items-center justify-center">
            <div className="w-[9px] h-[9px] rounded-full bg-[#8c1a10]" />
          </div>
          <div className="w-[24px] h-[24px] rounded-full bg-[#febc2e] ml-[16px]" />
          <div className="w-[24px] h-[24px] rounded-full bg-[#28c840] ml-[16px]" />
          <svg viewBox="0 0 22 28" className="w-[22px] h-[28px] ml-[251px]">
            <path d="M0 0H16L22 6V28H0Z" fill="#8a8a8a" />
            <path d="M4 14 14 8l3 6-3 6Z" fill="none" stroke="#2a2a2a" strokeWidth="1.500" />
          </svg>
          <span className="ml-[13px] text-[26px] font-bold tracking-[0.26px] text-[#8e8e8e] whitespace-nowrap">
            StaticStarCluster - 3d-cluster-unity - PC, Mac &amp; Linux Standalone - Unity 2020.3.5f1 Personal (Personal) &lt;Metal&gt;
          </span>
        </div>
        <Toolbar />
        <div className="h-[10px] shrink-0" />
        <div className="flex-1 flex min-h-0">
          <div className="w-[1642px] flex flex-col shrink-0">
            <div className="h-[548px] flex gap-[4px] shrink-0">
              <Hierarchy />
              <Game />
            </div>
            <div className="h-[5px] shrink-0" />
            <Project />
          </div>
          <Inspector />
        </div>
        <StatusBar />
      </div>
    </div>
  );
}
